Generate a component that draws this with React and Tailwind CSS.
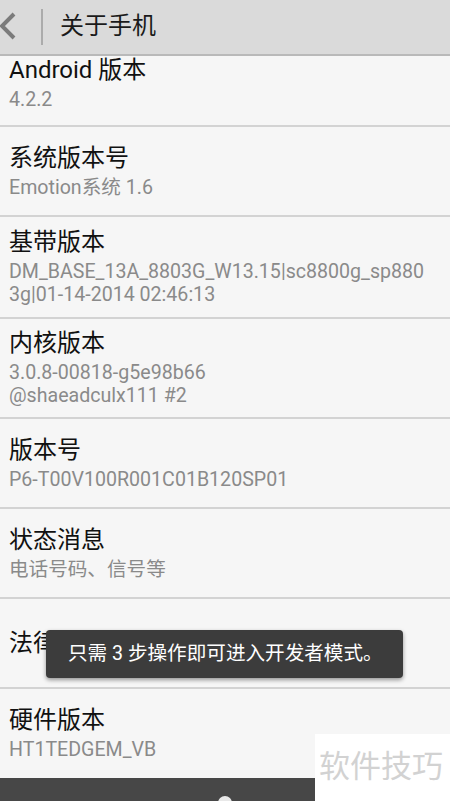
import React from 'react';

const font = { fontFamily: 'Roboto, "Noto Sans CJK SC", sans-serif' };

const rows = [
  { title: 'Android 版本', sub: ['4.2.2'], h: 'h-[71px]', top: true },
  { title: '系统版本号', sub: ['Emotion系统 1.6'], h: 'h-[90px]' },
  { title: '基带版本', sub: ['DM_BASE_13A_8803G_W13.15|sc8800g_sp880', '3g|01-14-2014 02:46:13'], h: 'h-[102px]' },
  { title: '内核版本', sub: ['3.0.8-00818-g5e98b66', '@shaeadculx111 #2'], h: 'h-[100px]' },
  { title: '版本号', sub: ['P6-T00V100R001C01B120SP01'], h: 'h-[90px]' },
  { title: '状态消息', sub: ['电话号码、信号等'], h: 'h-[90px]' },
  { title: '法律信息', sub: [], h: 'h-[90px]' },
  { title: '硬件版本', sub: ['HT1TEDGEM_VB'], h: 'h-[89px]', last: true },
];

function Row({ row }) {
  return (
    <div
      className={`${row.h} flex flex-col pl-[9px] ${row.top ? 'justify-start pt-0' : 'justify-center'} ${row.last ? '' : 'border-b-2 border-[#d3d3d3]'}`}
    >
      <div className="text-[24px] leading-[28px] text-[#111111]">{row.title}</div>
      {row.sub.length > 0 && (
        <div className="mt-1 text-[19.6px] leading-[23px] text-[#8a8a8a] whitespace-nowrap">
          {row.sub.map((s) => (
            <div key={s}>{s}</div>
          ))}
        </div>
      )}
    </div>
  );
}

export default function App() {
  return (
    <div className="relative w-[450px] h-[801px] overflow-hidden bg-[#f6f6f6]" style={font}>
      {/* header */}
      <div className="h-[56px] bg-[#dadada] border-b-2 border-[#b9b9b9] flex items-center">
        <svg width="16" height="30" viewBox="0 0 16 30" className="-mt-[2px]">
          <path d="M14 3 L2 15 L14 27" fill="none" stroke="#7b7b7b" strokeWidth="4" />
        </svg>
        <div className="ml-[25px] w-[2px] h-[36px] bg-[#ababab]" />
        <div className="ml-[17px] text-[24px] leading-[28px] text-[#1a1a1a] -mt-[2px]">关于手机</div>
      </div>

      {rows.map((r) => (
        <Row key={r.title} row={r} />
      ))}

      {/* bottom bar */}
      <div className="h-[23px] bg-[#474747] flex justify-center overflow-hidden">
        <div className="mt-[18px] w-[14px] h-[14px] rounded-full bg-[#e8e8e8]" />
      </div>

      {/* toast */}
      <div className="absolute left-[46px] top-[630px] w-[357px] h-[48px] rounded-[4px] bg-[#3c3c3c] shadow-[0_2px_4px_rgba(0,0,0,0.4)] flex items-center pl-[22px]">
        <span className="text-[19.6px] text-white whitespace-nowrap">只需 3 步操作即可进入开发者模式。</span>
      </div>

      {/* watermark */}
      <div className="absolute left-[315px] top-[734px] w-[135px] h-[67px] bg-white flex items-center pl-[4px]">
        <span className="text-[31px] text-[#d2d2d2] whitespace-nowrap">软件技巧</span>
      </div>
    </div>
  );
}
